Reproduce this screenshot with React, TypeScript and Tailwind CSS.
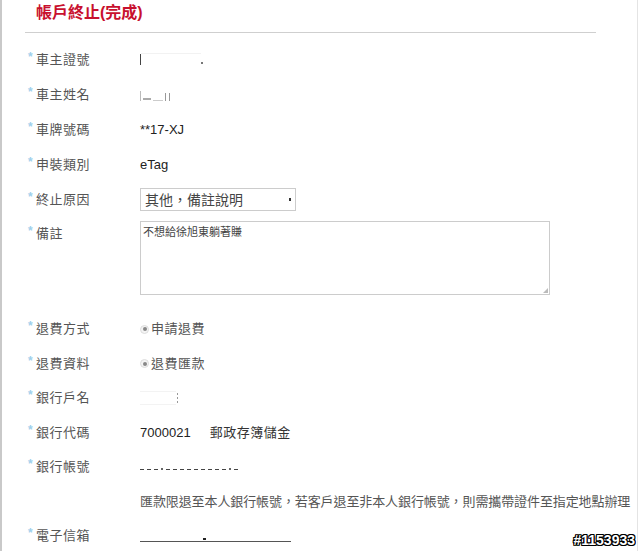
const font = "font-['Arial','Liberation_Sans','Noto_Sans_CJK_TC',sans-serif]";

function Label({ text }: { text: string }) {
  return (
    <div className="w-[114px] shrink-0 flex items-start">
      <span className="w-[10px] text-[12px] leading-[12px] font-bold text-[#9fd0ec] -mt-[1px] pl-[2px]">*</span>
      <span className="text-[13px] leading-[16px] text-[#555] tracking-[0.5px]">{text}</span>
    </div>
  );
}

function Row({ label, h = "h-[35px]", children }: { label?: string; h?: string; children?: React.ReactNode }) {
  return (
    <div className={`flex items-center ${h}`}>
      {label ? <Label text={label} /> : <div className="w-[114px] shrink-0" />}
      <div className="flex items-center">{children}</div>
    </div>
  );
}

function Radio({ text }: { text: string }) {
  return (
    <div className="flex items-center gap-[2px]">
      <span className="w-[9px] h-[9px] rounded-full border border-[#ddd] bg-[#f4f4f4] flex items-center justify-center">
        <span className="w-[4px] h-[4px] rounded-full bg-[#888]" />
      </span>
      <span className="text-[13px] leading-[16px] text-[#555] tracking-[0.5px]">{text}</span>
    </div>
  );
}

export default function App() {
  return (
    <div className={`relative w-[640px] h-[551px] bg-white overflow-hidden ${font}`}>
      <div className="w-[638px] h-full border-l-2 border-l-[#c9c9c9] border-r border-r-[#e4e4e4]">
        {/* Header */}
        <div className="ml-[23px] w-[571px] h-[33px] border-b border-[#cfcfcf] pl-[11px] flex items-center">
          <h1 className="text-[16px] font-bold text-[#c8102e] leading-[20px] -mt-[6px]">帳戶終止(完成)</h1>
        </div>

        <div className="pl-[24px] pt-[9px]">
          <Row label="車主證號">
            <span className="w-px h-[11px] bg-[#444]" />
            <span className="w-[60px] h-[13px] border-t border-[#f2f2f2]" />
            <span className="w-[2px] h-[2px] bg-[#777] mt-[6px]" />
          </Row>
          <Row label="車主姓名">
            <span className="flex items-end gap-[2px] h-[12px]">
              <span className="w-px h-[10px] bg-[#bbb]" />
              <span className="w-[8px] h-[2px] bg-[#aaa] mb-[1px]" />
              <span className="w-[10px] h-[1px] bg-[#ccc]" />
              <span className="w-[5px] h-[8px] border-l border-r border-[#999]" />
            </span>
          </Row>
          <Row label="車牌號碼">
            <span className="text-[13px] text-[#222]">**17-XJ</span>
          </Row>
          <Row label="申裝類別">
            <span className="text-[13px] text-[#222]">eTag</span>
          </Row>
          <Row label="終止原因">
            <div className="w-[156px] h-[23px] border border-[#ccc] flex items-center justify-between pl-[4px] pr-[4px]">
              <span className="text-[14px] text-[#444] leading-[18px]">其他，備註說明</span>
              <span className="w-[2px] h-[3px] bg-[#333]" />
            </div>
          </Row>
          <div className="flex items-start h-[95px] pt-[4px]">
            <div className="pt-[5px]">
              <Label text="備註" />
            </div>
            <div className="relative w-[410px] h-[74px] border border-[#ccc] px-[2px] pt-[3px]">
              <div className="text-[11px] leading-[14px] text-[#444]">不想給徐旭東躺著賺</div>
              <span className="absolute right-[1px] bottom-[1px] w-0 h-0 border-l-[5px] border-l-transparent border-b-[5px] border-b-[#bbb]" />
            </div>
          </div>
          <Row label="退費方式" h="h-[34.5px]">
            <Radio text="申請退費" />
          </Row>
          <Row label="退費資料" h="h-[34.5px]">
            <Radio text="退費匯款" />
          </Row>
          <Row label="銀行戶名" h="h-[34.5px]">
            <span className="w-[36px] h-[14px] border-y border-[#f3f3f3]" />
            <span className="flex flex-col gap-[2px] ml-[1px]">
              <span className="w-px h-[2px] bg-[#999]" />
              <span className="w-px h-[2px] bg-[#999]" />
              <span className="w-px h-[2px] bg-[#999]" />
            </span>
          </Row>
          <Row label="銀行代碼" h="h-[34.5px]">
            <span className="text-[13px] text-[#222]">7000021</span>
            <span className="ml-[19px] text-[13px] text-[#333] tracking-[0.5px]">郵政存簿儲金</span>
          </Row>
          <Row label="銀行帳號" h="h-[34.5px]">
            <span className="flex items-center gap-[3px] mt-[4px]">
              {["d", "d", "d", "p", "d", "d", "d", "d", "d", "d", "d", "d", "d", "p", "d"].map((k, i) =>
                k === "d" ? (
                  <span key={i} className="w-[4px] h-px bg-[#444]" />
                ) : (
                  <span key={i} className="w-[2px] h-[2px] bg-[#666]" />
                )
              )}
            </span>
          </Row>
          <Row h="h-[34.5px]">
            <span className="text-[13px] text-[#555] whitespace-nowrap tracking-[-0.1px]">
              匯款限退至本人銀行帳號，若客戶退至非本人銀行帳號，則需攜帶證件至指定地點辦理
            </span>
          </Row>
          <Row label="電子信箱" h="h-[34.5px]">
            <span className="relative w-[151px] h-px bg-[#555] mt-[10px]">
              <span className="absolute left-[63px] -top-[3px] w-[3px] h-[2px] bg-[#222]" />
            </span>
          </Row>
        </div>
      </div>

      {/* watermark */}
      <span className="absolute right-[5px] bottom-[3px] text-[14px] leading-[16px] font-bold text-white [text-shadow:1px_0_0_#000,-1px_0_0_#000,0_1px_0_#000,0_-1px_0_#000,1px_1px_0_#000,-1px_-1px_0_#000,1px_-1px_0_#000,-1px_1px_0_#000]">
        #1153933
      </span>
    </div>
  );
}
